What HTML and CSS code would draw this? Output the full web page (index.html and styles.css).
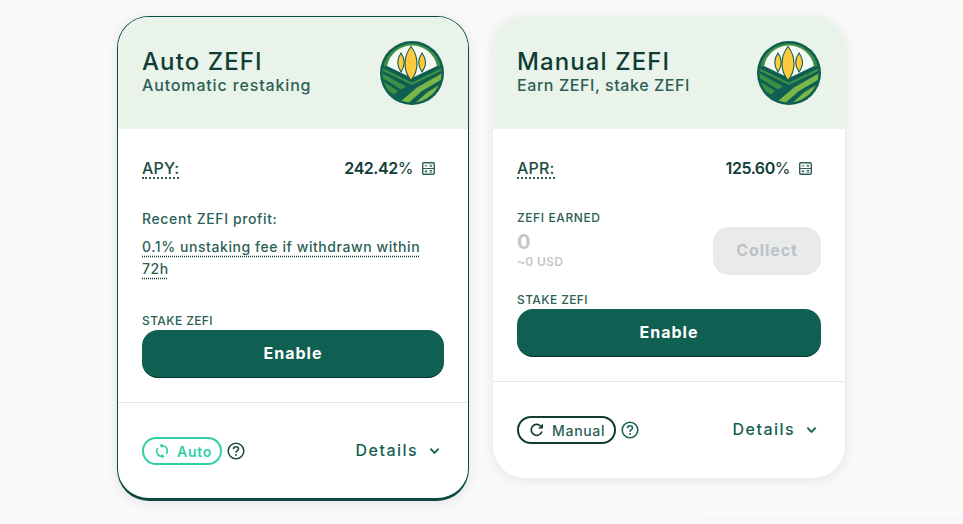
FILE: index.html
```html
<!DOCTYPE html>
<html lang="en">
<head>
<meta charset="utf-8">
<title>ZEFI Pools</title>
<link rel="stylesheet" href="styles.css">
</head>
<body>
<svg class="defs" width="0" height="0" aria-hidden="true">
  <defs>
    <clipPath id="disc"><circle cx="32" cy="32" r="29.500"/></clipPath>
    <symbol id="logo" viewBox="0 0 64 64">
      <circle cx="32" cy="32" r="32" fill="#0e5e52"/>
      <circle cx="32" cy="32" r="29.500" fill="#3d8f45"/>
      <circle cx="32" cy="32" r="26.500" fill="#0e5e52"/>
      <path d="M7 25A25.500 25.500 0 0 1 57 25L32 37Z" fill="#f5f9f3"/>
      <path d="M31 5.500C34.500 10 37 16.500 37 23S34.500 35 31 39.500C27.500 35 25 29 25 23S27.500 10 31 5.500Z" fill="#ffcb3d" stroke="#0e5e52" stroke-width="1.100"/>
      <path d="M21 12C23 15 24.200 18.500 24.200 21.500S23 28 21 31C19 28 17.800 24.500 17.800 21.500S19 15 21 12Z" fill="#ffcb3d" stroke="#0e5e52" stroke-width="1.100"/>
      <path d="M42 12C44 15 45.500 18.500 45.500 21.500S44 28 42 31C40 28 38.700 24.500 38.700 21.500S40 15 42 12Z" fill="#ffcb3d" stroke="#0e5e52" stroke-width="1.100"/>
      <g clip-path="url(#disc)">
        <path d="M0 23L32 39L64 23V64H0Z" fill="#0e5e52"/>
        <path d="M0 26L32 41.500L64 26V28.500L32 44L0 28.500Z" fill="#3d8f45"/>
        <path d="M0 31L26 45.500L21 48.500L0 35.500Z" fill="#3d8f45"/>
        <path d="M0 38.500L18 50L14 53.500L0 44Z" fill="#3d8f45"/>
        <path d="M0 47L11 55.500L8 58L0 52Z" fill="#3d8f45"/>
        <path d="M64 31L37 46.500L21 60L26 64L42 50L64 37Z" fill="#7ab648"/>
        <path d="M64 41L47 51.500L33 64H39L51 54.500L64 46.500Z" fill="#7ab648"/>
        <path d="M64 50L55 55.500L46 64H50L58 57.500L64 54Z" fill="#5ea544"/>
      </g>
    </symbol>
    <symbol id="calc" viewBox="0 0 13 13">
      <rect x="0.700" y="0.700" width="11.600" height="11.600" rx="1.200" fill="none" stroke="#2c5f56" stroke-width="1.400"/>
      <path d="M0.700 6.500H12.300M2.700 3.800H5.300M7.700 2.500L10 4.900M10 2.500L7.700 4.900M2.700 9.300H5.300M4 8V10.600M7.600 8.500H10.200M7.600 10.100H10.200" fill="none" stroke="#2c5f56" stroke-width="1"/>
    </symbol>
    <symbol id="help" viewBox="0 0 18 18">
      <circle cx="9" cy="9" r="7.800" fill="none" stroke="currentColor" stroke-width="1.600"/>
      <path d="M6.500 7.200C6.500 5.700 7.600 4.800 9 4.800S11.500 5.700 11.500 7C11.500 8.700 9 8.800 9 10.700" fill="none" stroke="currentColor" stroke-width="1.600"/>
      <circle cx="9" cy="13" r="1" fill="currentColor"/>
    </symbol>
    <symbol id="chev" viewBox="0 0 12 8">
      <path d="M1.500 1.500L6 6L10.500 1.500" fill="none" stroke="currentColor" stroke-width="2"/>
    </symbol>
  </defs>
</svg>
<main class="page">
  <article class="card card-active">
    <header class="card-head">
      <div class="titles">
        <h2>Auto ZEFI</h2>
        <p class="sub-wide">Automatic restaking</p>
      </div>
      <svg class="logo"><use href="#logo"/></svg>
    </header>
    <div class="card-body">
      <div class="rate-row">
        <span class="rate-label">APY:</span>
        <span class="rate-value">242.42<span class="pct">%</span><svg class="calc"><use href="#calc"/></svg></span>
      </div>
      <p class="profit">Recent ZEFI profit:</p>
      <p class="fee"><span class="dotted">0.1% unstaking fee if withdrawn within 72h</span></p>
      <div class="stake stake-auto">
        <div class="stake-label">STAKE ZEFI</div>
        <button class="enable">Enable</button>
      </div>
    </div>
    <footer class="card-foot foot-auto">
      <div class="tags">
        <span class="tag tag-auto">
          <svg class="tag-icon" viewBox="0 0 16 18"><path d="M8 3A6 6 0 0 1 13 12.300M8 15A6 6 0 0 1 3 5.700" fill="none" stroke="#2fd0a7" stroke-width="1.700"/><path d="M8.500 0.500V5.500L5 3ZM7.500 12.500V17.500L11 15Z" fill="#2fd0a7"/></svg>
          Auto
        </span>
        <svg class="help"><use href="#help"/></svg>
      </div>
      <span class="details">Details<svg class="chev"><use href="#chev"/></svg></span>
    </footer>
  </article>

  <article class="card">
    <header class="card-head">
      <div class="titles">
        <h2>Manual ZEFI</h2>
        <p>Earn ZEFI, stake ZEFI</p>
      </div>
      <svg class="logo"><use href="#logo"/></svg>
    </header>
    <div class="card-body">
      <div class="rate-row">
        <span class="rate-label">APR:</span>
        <span class="rate-value">125.60<span class="pct">%</span><svg class="calc"><use href="#calc"/></svg></span>
      </div>
      <div class="earned">
        <div class="earned-info">
          <div class="earned-label">ZEFI EARNED</div>
          <div class="earned-amount">0</div>
          <div class="earned-usd">~0 USD</div>
        </div>
        <button class="collect" disabled>Collect</button>
      </div>
      <div class="stake stake-manual">
        <div class="stake-label">STAKE ZEFI</div>
        <button class="enable">Enable</button>
      </div>
    </div>
    <footer class="card-foot">
      <div class="tags">
        <span class="tag tag-manual">
          <svg class="tag-icon" viewBox="0 0 16 16"><path d="M13 9.500A5.500 5.500 0 1 1 11.500 3.800" fill="none" stroke="#0f3d36" stroke-width="1.600"/><path d="M14 1.500V6.500H9Z" fill="#0f3d36"/></svg>
          Manual
        </span>
        <svg class="help help-light"><use href="#help"/></svg>
      </div>
      <span class="details">Details<svg class="chev"><use href="#chev"/></svg></span>
    </footer>
  </article>
</main>
<div class="corner-panel"></div>
</body>
</html>
```

FILE: styles.css
```css
* { box-sizing: border-box; }
html, body { margin: 0; height: 100%; }
body {
  background: #f9f9fa;
  font-family: "Inter", "Liberation Sans", sans-serif;
  color: #0f3d36;
  overflow: hidden;
  position: relative;
}
.defs { position: absolute; }
.page {
  display: flex;
  align-items: flex-start;
  gap: 24px;
  padding: 16px 0 0 117px;
}
.card {
  width: 352px;
  height: 462px;
  background: #fff;
  border-radius: 32px;
  overflow: hidden;
  display: flex;
  flex-direction: column;
  box-shadow: 0 2px 12px rgba(25, 19, 38, 0.09);
}
.card-active {
  height: 485px;
  border: 1px solid #0c4a40;
  border-bottom-width: 3px;
}
.card-head {
  height: 113px;
  flex: none;
  background: #e9f3e9;
  display: flex;
  justify-content: space-between;
  align-items: flex-start;
  padding: 24px 24px 0;
}
.card-active .card-head { height: 112px; padding-top: 23px; }
.titles h2 {
  margin: 8px 0 0;
  font-size: 24px;
  line-height: 27px;
  font-weight: 500;
  letter-spacing: 1.1px;
  color: #0f3d36;
}
.titles p {
  margin: 0;
  font-size: 16px;
  line-height: 20px;
  font-weight: 500;
  letter-spacing: 0.58px;
  color: #2c5f56;
}
.titles .sub-wide { letter-spacing: 0.85px; }
.logo { width: 64px; height: 64px; margin-top: 1px; flex: none; }
.card-body { flex: 1; padding: 0 24px; }
.rate-row {
  height: 24px;
  margin-top: 27px;
  display: flex;
  justify-content: space-between;
  align-items: center;
}
.rate-label {
  margin-top: 2px;
  font-size: 16px;
  line-height: 18px;
  font-weight: 500;
  letter-spacing: 0.2px;
  border-bottom: 2px dotted #2c5f56;
  color: #1c4c44;
}
.rate-value {
  display: flex;
  align-items: center;
  font-size: 16px;
  font-weight: 600;
  letter-spacing: -0.45px;
  color: #0f3d36;
}
.pct { font-weight: 400; }
.calc { width: 13px; height: 13px; margin: 1px 9px 0 9px; }
.profit {
  margin: 29px 0 0;
  font-size: 14px;
  line-height: 20px;
  font-weight: 500;
  letter-spacing: 0.62px;
  color: #2c5f56;
}
.fee {
  margin: 7px 0 0;
  font-size: 14px;
  line-height: 22px;
  font-weight: 500;
  letter-spacing: 0.57px;
  color: #2c5f56;
}
.dotted {
  text-decoration: underline dotted #12362f;
  text-underline-offset: 4px;
}
.stake-auto { margin-top: 32px; }
.stake-manual { margin-top: 16px; }
.stake-label {
  font-size: 12px;
  line-height: 18px;
  font-weight: 500;
  letter-spacing: 0.4px;
  color: #2c5f56;
}
.enable {
  display: block;
  width: 100%;
  height: 48px;
  border: 0;
  border-bottom: 1px solid #08332d;
  border-radius: 16px;
  background: #0f5f53;
  color: #fff;
  padding: 0 0 2px;
  font: 700 16px "Inter", "Liberation Sans", sans-serif;
  letter-spacing: 1px;
}
.earned {
  margin-top: 30px;
  display: flex;
  justify-content: space-between;
  align-items: flex-start;
}
.earned-label { font-size: 12px; line-height: 16px; font-weight: 500; letter-spacing: 0.6px; color: #2c5f56; }
.earned-amount { margin-top: 4px; font-size: 20px; line-height: 24px; font-weight: 700; letter-spacing: 0.5px; color: #c4c8cb; }
.earned-usd { font-size: 12px; line-height: 16px; font-weight: 600; letter-spacing: 0.3px; color: #c4c8cb; }
.collect {
  margin-top: 17px;
  width: 108px;
  height: 48px;
  border: 0;
  border-radius: 16px;
  background: #e9eaeb;
  color: #bdc2c4;
  padding: 0 0 2px;
  font: 700 16px "Inter", "Liberation Sans", sans-serif;
  letter-spacing: 0.9px;
}
.card-foot {
  height: 97px;
  flex: none;
  border-top: 1px solid #e7e7eb;
  padding: 0 24px;
  display: flex;
  justify-content: space-between;
  align-items: center;
}
.foot-auto { height: 96px; padding-top: 1px; }
.tags { display: flex; align-items: center; gap: 5px; }
.tag {
  height: 28px;
  border-radius: 14px;
  border: 2px solid;
  display: inline-flex;
  align-items: center;
  font-size: 14px;
  font-weight: 500;
  letter-spacing: 0.7px;
}
.tag-auto { width: 80px; padding-left: 10px; gap: 7px; border-color: #2fd0a7; color: #2fd0a7; font-weight: 600; }
.tag-manual { width: 99px; padding-left: 10px; gap: 7px; border-color: #0f3d36; color: #2c5f56; }
.tag-icon { width: 16px; height: 16px; flex: none; }
.help { width: 18px; height: 18px; color: #1c4c44; }
.help-light { color: #1a6154; }
.details {
  display: flex;
  align-items: center;
  margin-bottom: 2px;
  font-size: 16px;
  font-weight: 500;
  letter-spacing: 1.45px;
  color: #14604f;
}
.chev { width: 11px; height: 8px; margin: 1px 4px 0 11px; }
.corner-panel {
  position: absolute;
  left: 697px;
  top: 518px;
  width: 266px;
  height: 12px;
  background: #fafafb;
  border: 1px solid #eef2f6;
  border-radius: 4px 0 0 0;
}
.corner-panel::before {
  content: "";
  position: absolute;
  left: 26px;
  top: 0;
  width: 1px;
  height: 100%;
  background: #eef2f6;
}
```
